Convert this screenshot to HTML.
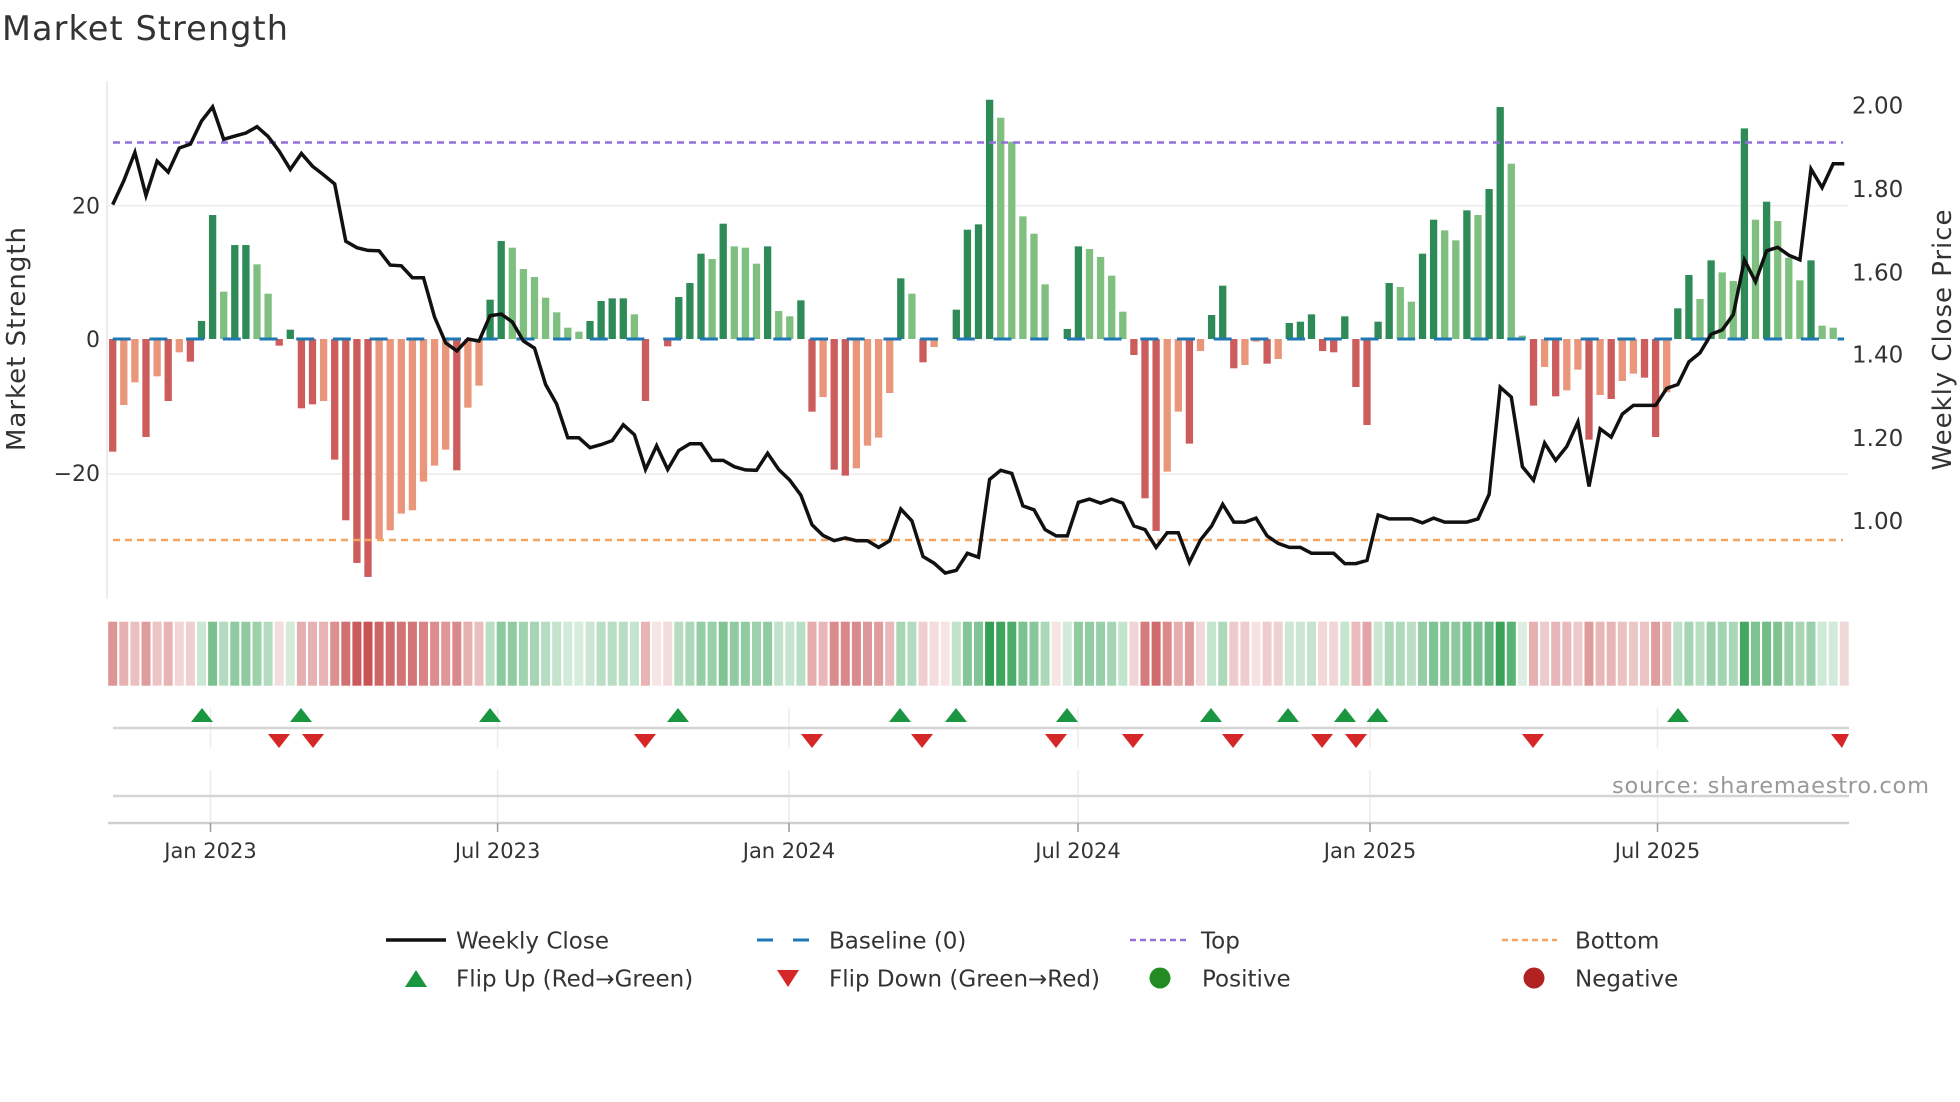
<!DOCTYPE html>
<html><head><meta charset="utf-8"><style>
html,body{margin:0;padding:0;background:#fff;}
svg{display:block;}
text{font-family:"DejaVu Sans","Liberation Sans",sans-serif;fill:#333;}
</style></head><body>
<svg id="s" width="1960" height="1102" viewBox="0 0 1960 1102" xmlns="http://www.w3.org/2000/svg">
<rect width="1960" height="1102" fill="#fff"/>
<text x="2" y="40" font-size="33.5" textLength="286">Market Strength</text>
<line x1="107" y1="205.7" x2="1848" y2="205.7" stroke="#ececec" stroke-width="1.5"/>
<line x1="107" y1="474" x2="1848" y2="474" stroke="#ececec" stroke-width="1.5"/>
<line x1="107" y1="81" x2="107" y2="599" stroke="#e6e6e6" stroke-width="1.5"/>
<g id="bars"></g>
<line x1="113" y1="142.5" x2="1843" y2="142.5" stroke="#9370db" stroke-width="2.5" stroke-dasharray="7 5"/>
<line x1="113" y1="540" x2="1843" y2="540" stroke="#f4a460" stroke-width="2.5" stroke-dasharray="7 5"/>
<line x1="112.7" y1="339" x2="1844" y2="339" stroke="#1f77b4" stroke-width="3" stroke-dasharray="18 18.7"/>
<polyline id="pl" fill="none" stroke="#111" stroke-width="3.5" stroke-linejoin="miter"/>
<g id="heat"></g>
<g font-size="22" text-anchor="end">
<text x="100" y="213.5">20</text>
<text x="100" y="347">0</text>
<text x="100" y="481">−20</text>
</g>
<text transform="translate(25,339) rotate(-90)" font-size="26" text-anchor="middle" textLength="224">Market Strength</text>
<g font-size="23" text-anchor="start">
<text x="1852" y="113.5">2.00</text>
<text x="1852" y="197">1.80</text>
<text x="1852" y="280.5">1.60</text>
<text x="1852" y="362.5">1.40</text>
<text x="1852" y="446">1.20</text>
<text x="1852" y="529">1.00</text>
</g>
<text transform="translate(1951,340) rotate(-90)" font-size="26" text-anchor="middle" textLength="261">Weekly Close Price</text>
<g stroke="#ececec" stroke-width="1.5">
<line x1="210.5" y1="708" x2="210.5" y2="748"/><line x1="210.5" y1="770" x2="210.5" y2="823"/>
<line x1="497.6" y1="708" x2="497.6" y2="748"/><line x1="497.6" y1="770" x2="497.6" y2="823"/>
<line x1="789" y1="708" x2="789" y2="748"/><line x1="789" y1="770" x2="789" y2="823"/>
<line x1="1078" y1="708" x2="1078" y2="748"/><line x1="1078" y1="770" x2="1078" y2="823"/>
<line x1="1370" y1="708" x2="1370" y2="748"/><line x1="1370" y1="770" x2="1370" y2="823"/>
<line x1="1657.5" y1="708" x2="1657.5" y2="748"/><line x1="1657.5" y1="770" x2="1657.5" y2="823"/>
</g>
<line x1="113" y1="728" x2="1849" y2="728" stroke="#d4d4d4" stroke-width="2.5"/>
<line x1="113" y1="796" x2="1849" y2="796" stroke="#d4d4d4" stroke-width="2.5"/>
<line x1="108" y1="823" x2="1849" y2="823" stroke="#cfcfcf" stroke-width="2.5"/>
<g id="tri"></g>
<g stroke="#999" stroke-width="1.5">
<line x1="210.5" y1="823" x2="210.5" y2="832"/><line x1="497.6" y1="823" x2="497.6" y2="832"/>
<line x1="789" y1="823" x2="789" y2="832"/><line x1="1078" y1="823" x2="1078" y2="832"/>
<line x1="1370" y1="823" x2="1370" y2="832"/><line x1="1657.5" y1="823" x2="1657.5" y2="832"/>
</g>
<g font-size="21" text-anchor="middle">
<text x="210.5" y="858">Jan 2023</text>
<text x="497.6" y="858">Jul 2023</text>
<text x="789" y="858">Jan 2024</text>
<text x="1078" y="858">Jul 2024</text>
<text x="1370" y="858">Jan 2025</text>
<text x="1657.5" y="858">Jul 2025</text>
</g>
<text x="1612" y="793" font-size="22.5" style="fill:#999" textLength="317">source: sharemaestro.com</text>
<line x1="386" y1="940" x2="446" y2="940" stroke="#111" stroke-width="3.5"/>
<text x="456" y="948.5" font-size="23">Weekly Close</text>
<line x1="757" y1="940" x2="825" y2="940" stroke="#1f77b4" stroke-width="3" stroke-dasharray="16 20"/>
<text x="829" y="948.5" font-size="23">Baseline (0)</text>
<line x1="1130" y1="940" x2="1187" y2="940" stroke="#9370db" stroke-width="2.5" stroke-dasharray="6 4"/>
<text x="1201" y="948.5" font-size="23">Top</text>
<line x1="1502" y1="940" x2="1557" y2="940" stroke="#f4a460" stroke-width="2.5" stroke-dasharray="6 4"/>
<text x="1575" y="948.5" font-size="23">Bottom</text>
<polygon points="405,987 427,987 416,970" fill="#1a9641"/>
<text x="456" y="986.5" font-size="23">Flip Up (Red→Green)</text>
<polygon points="777,970 799,970 788,987" fill="#d62728"/>
<text x="829" y="986.5" font-size="23">Flip Down (Green→Red)</text>
<circle cx="1160" cy="978" r="10.5" fill="#228b22"/>
<text x="1202" y="986.5" font-size="23">Positive</text>
<circle cx="1534" cy="978" r="10.5" fill="#b22222"/>
<text x="1575" y="986.5" font-size="23">Negative</text>
</svg>
<script>
(function(){
var NS="http://www.w3.org/2000/svg";
var v=[-16.9,-9.9,-6.5,-14.7,-5.6,-9.3,-2,-3.4,2.7,18.6,7.1,14.1,14.1,11.2,6.8,-1,1.4,-10.4,-9.8,-9.3,-18.1,-27.2,-33.6,-35.7,-30,-28.7,-26.2,-25.7,-21.4,-19,-16.6,-19.7,-10.3,-7,5.9,14.7,13.7,10.5,9.3,6.2,4,1.7,1.1,2.7,5.7,6.1,6.1,3.7,-9.3,0,-1.1,6.3,8.4,12.8,12,17.3,13.9,13.7,11.3,13.9,4.2,3.4,5.8,-10.9,-8.7,-19.6,-20.5,-19.4,-16,-14.8,-8.1,9.1,6.8,-3.5,-1.2,0,4.4,16.4,17.2,35.9,33.2,29.6,18.4,15.8,8.2,0,1.5,13.9,13.5,12.3,9.5,4.1,-2.4,-23.9,-28.8,-19.9,-10.9,-15.7,-1.8,3.6,8,-4.4,-3.9,-0.4,-3.7,-3,2.4,2.6,3.7,-1.8,-2,3.4,-7.2,-12.9,2.6,8.4,7.8,5.6,12.8,17.9,16.3,14.8,19.3,18.6,22.5,34.8,26.3,0.5,-10,-4.2,-8.6,-7.7,-4.6,-15.1,-8.4,-9,-6.3,-5.2,-5.8,-14.7,-8,4.6,9.6,6,11.8,10,8.7,31.6,17.9,20.6,17.7,12.2,8.8,11.8,2,1.7];
var dk={};
var darkIdx=[0,3,5,7,8,9,11,12,15,16,17,18,20,21,22,23,31,34,35,43,44,45,46,48,50,51,52,53,55,59,62,63,65,66,71,73,76,77,78,79,86,87,92,93,94,97,99,100,101,104,106,107,108,109,110,111,112,113,114,115,118,119,122,124,125,128,130,133,135,138,139,141,142,144,147,149,153];
darkIdx.forEach(function(i){dk[i]=1;});
var X=function(i){return 112.7+i*11.1;};
var Y0=339,U=6.665;
var bars=document.getElementById("bars"),heat=document.getElementById("heat");
function mk(t,a,p){var e=document.createElementNS(NS,t);for(var k in a)e.setAttribute(k,a[k]);p.appendChild(e);return e;}
function mix(c,t){return "rgb("+Math.round(255+(c[0]-255)*t)+","+Math.round(255+(c[1]-255)*t)+","+Math.round(255+(c[2]-255)*t)+")";}
for(var i=0;i<v.length;i++){
 var val=v[i];
 if(val!==0){
  var col=val>0?(dk[i]?"#2e8b57":"#7fbf7f"):(dk[i]?"#cd5c5c":"#e9967a");
  var h=Math.abs(val)*U;
  mk("rect",{x:X(i)-3.65,y:val>0?Y0-h:Y0,width:7.3,height:h,fill:col},bars);
 }
 var t=0.15+0.85*Math.pow(Math.min(Math.abs(val)/36,1),0.8);
 var base=val>0?[52,160,84]:[200,82,84];
 mk("rect",{x:X(i)-4.5,y:621.7,width:9,height:64,fill:mix(base,t)},heat);
}
mk("rect",{x:X(156)-4.5,y:621.7,width:9,height:64,fill:"#f0d8d8"},heat);
var zy=[315,255,183,292,205,233,172,162,104,68,150,142,134,118,143,180,226,186,218,240,263,408,424,431,432,468,470,500,500,600,665,685,655,660,596,592,612,660,678,770,820,905,905,930,922,912,872,897,985,925,985,937,920,920,962,962,978,986,987,944,985,1012,1050,1125,1152,1165,1158,1165,1165,1182,1165,1085,1115,1205,1222,1247,1240,1197,1207,1010,987,995,1077,1087,1137,1153,1153,1068,1060,1070,1060,1070,1128,1137,1182,1145,1145,1220,1163,1128,1073,1118,1118,1108,1153,1172,1182,1182,1197,1197,1197,1223,1223,1215,1100,1110,1110,1110,1120,1108,1118,1118,1118,1110,1048,777,802,978,1012,918,962,927,865,1028,882,903,845,823,823,823,780,770,713,690,643,632,593,455,510,432,423,443,455,225,272,212,212];
var pts=[];for(var j=0;j<zy.length;j++){pts.push(X(j).toFixed(1)+","+(80+zy[j]/2.529).toFixed(1));}
document.getElementById("pl").setAttribute("points",pts.join(" "));
var tri=document.getElementById("tri");
[202,301,490,678,900,956,1067,1211,1288,1345,1377.5,1678].forEach(function(x){
 mk("polygon",{points:(x-11)+",722 "+(x+11)+",722 "+x+",708",fill:"#1a9641"},tri);});
[279,313,645,812,922,1056,1133,1233,1322,1356,1533,1842].forEach(function(x){
 var xr=Math.min(x+11,1849);
 mk("polygon",{points:(x-11)+",734 "+xr+",734 "+x+",748",fill:"#d62728"},tri);});
})();
</script>
</body></html>
